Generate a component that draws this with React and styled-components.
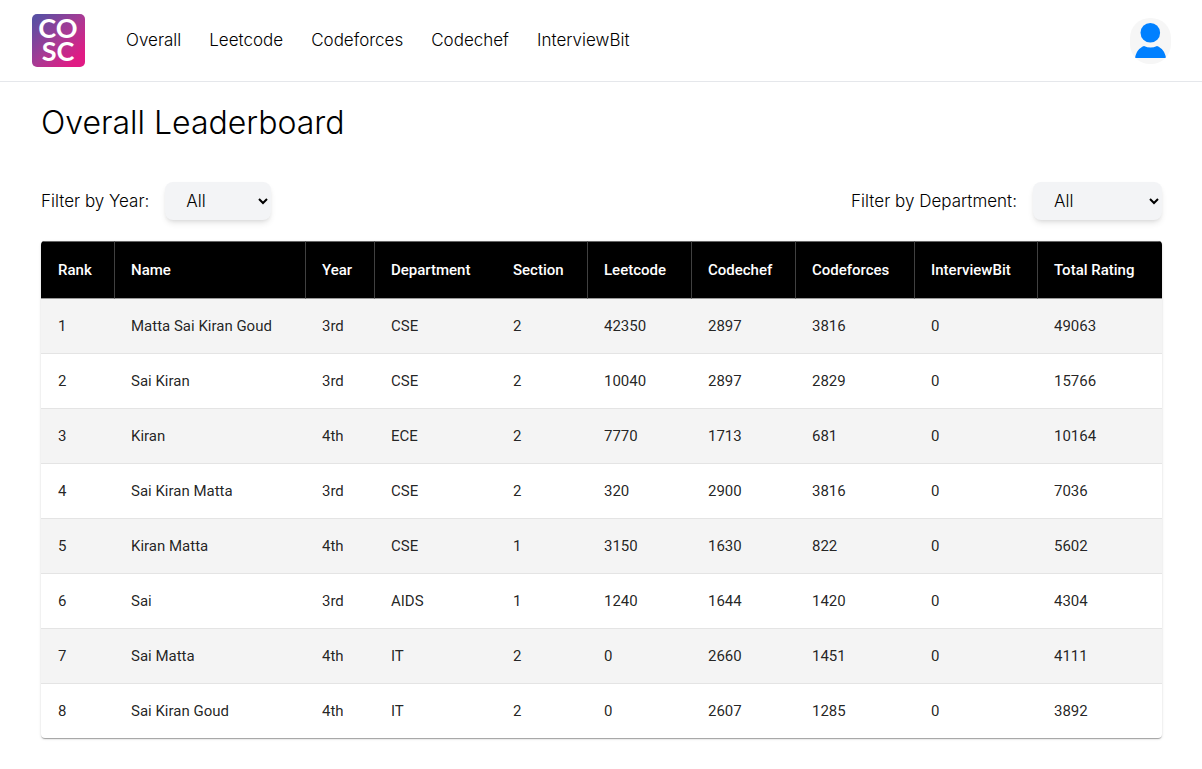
import React, { useState } from "react";
import styled, { createGlobalStyle } from "styled-components";

const GlobalStyle = createGlobalStyle`
  *, *::before, *::after { box-sizing: border-box; }
  body {
    margin: 0;
    background: #fff;
    color: #000;
    font-family: Inter, "Liberation Sans", sans-serif;
    font-size: 17px;
    font-weight: 300;
    line-height: 24px;
  }
`;

const Header = styled.header`
  display: flex;
  align-items: center;
  justify-content: space-between;
  height: 82px;
  padding: 0 31px 0 32px;
  border-bottom: 1px solid #e5e7eb;
`;

const HeaderStart = styled.div`
  display: flex;
  align-items: center;
  gap: 41px;
`;

const HomeLink = styled.a`
  display: block;
  height: 53px;
`;

const Nav = styled.nav`
  display: flex;
  gap: 28px;
  padding-bottom: 2px;
`;

const NavLink = styled.a`
  color: inherit;
  text-decoration: none;
`;

const ProfileButton = styled.button`
  display: block;
  width: 41px;
  height: 46px;
  padding: 0;
  border: 0;
  border-radius: 20px;
  overflow: hidden;
  background: #f6f6f6;
  cursor: pointer;
`;

const Main = styled.main`
  padding: 20px 40px 30px 41px;
`;

const Title = styled.h1`
  margin: 0 0 38px;
  font-size: 32px;
  font-weight: 300;
  line-height: 42px;
`;

const Filters = styled.div`
  display: flex;
  justify-content: space-between;
  margin-bottom: 21px;
`;

const Filter = styled.div`
  display: flex;
  align-items: center;
  gap: 16px;
`;

const Select = styled.select`
  width: ${({ $wide }) => ($wide ? 129 : 106)}px;
  height: 38px;
  padding: 0 0 0 17px;
  border: 0;
  border-radius: 8px;
  background: #f3f4f6;
  box-shadow: 0 4px 6px -1px rgba(0, 0, 0, 0.1), 0 2px 4px -2px rgba(0, 0, 0, 0.1);
  color: #000;
  font: inherit;
`;

const Paper = styled.div`
  overflow: hidden;
  border-radius: 4px;
  background: #fff;
  box-shadow: 0 2px 1px -1px rgba(0, 0, 0, 0.2), 0 1px 1px 0 rgba(0, 0, 0, 0.14),
    0 1px 3px 0 rgba(0, 0, 0, 0.12);
`;

const Table = styled.table`
  width: 100%;
  table-layout: fixed;
  border-collapse: separate;
  border-spacing: 0;
  font-family: Roboto, "Liberation Sans", sans-serif;
  font-size: 15px;
  font-weight: 400;
  line-height: 22px;
  text-align: left;
`;

const Column = styled.col`
  width: ${({ $width }) => $width}px;
`;

const HeadCell = styled.th`
  height: 58px;
  padding: 0;
  padding-left: ${({ $divided }) => ($divided ? 16 : 17)}px;
  border-top: 1px solid #666;
  border-bottom: 1px solid #999;
  border-left: ${({ $divided }) => ($divided ? "1px solid #404040" : "0")};
  background: #000;
  color: #fff;
  font-weight: 500;
  white-space: nowrap;
`;

const Row = styled.tr`
  &:nth-child(odd) {
    background: #f4f4f4;
  }
  &:last-child td {
    border-bottom: 0;
  }
`;

const Cell = styled.td`
  padding: 16px 0 16px 17px;
  border-bottom: 1px solid #e4e4e4;
  color: rgba(0, 0, 0, 0.87);
`;

const LogoSvg = styled.svg`
  display: block;
  overflow: visible;
`;

const columns = [
  { label: "Rank", width: 73 },
  { label: "Name", width: 191, divided: true },
  { label: "Year", width: 69, divided: true },
  { label: "Department", width: 122, divided: true },
  { label: "Section", width: 91 },
  { label: "Leetcode", width: 104, divided: true },
  { label: "Codechef", width: 104, divided: true },
  { label: "Codeforces", width: 119, divided: true },
  { label: "InterviewBit", width: 123, divided: true },
  { label: "Total Rating", width: 125, divided: true },
];

const students = [
  [1, "Matta Sai Kiran Goud", "3rd", "CSE", 2, 42350, 2897, 3816, 0, 49063],
  [2, "Sai Kiran", "3rd", "CSE", 2, 10040, 2897, 2829, 0, 15766],
  [3, "Kiran", "4th", "ECE", 2, 7770, 1713, 681, 0, 10164],
  [4, "Sai Kiran Matta", "3rd", "CSE", 2, 320, 2900, 3816, 0, 7036],
  [5, "Kiran Matta", "4th", "CSE", 1, 3150, 1630, 822, 0, 5602],
  [6, "Sai", "3rd", "AIDS", 1, 1240, 1644, 1420, 0, 4304],
  [7, "Sai Matta", "4th", "IT", 2, 0, 2660, 1451, 0, 4111],
  [8, "Sai Kiran Goud", "4th", "IT", 2, 0, 2607, 1285, 0, 3892],
];

const sites = ["Overall", "Leetcode", "Codeforces", "Codechef", "InterviewBit"];

function Logo() {
  return (
    <LogoSvg width="53" height="53" viewBox="0 0 53 53" role="img" aria-label="COSC">
      <defs>
        <linearGradient id="logo-fill" x1="0" y1="0" x2="1" y2="1">
          <stop offset="0.08" stopColor="#5a4fa3" />
          <stop offset="0.5" stopColor="#a83a94" />
          <stop offset="0.85" stopColor="#e01b84" />
        </linearGradient>
      </defs>
      <rect width="53" height="53" rx="5" fill="url(#logo-fill)" />
      <text fill="#fff" fontFamily="Lato, sans-serif" fontWeight="700" fontSize="27" textAnchor="middle">
        <tspan x="26" y="24">CO</tspan>
        <tspan x="26" y="47">SC</tspan>
      </text>
    </LogoSvg>
  );
}

function Avatar() {
  return (
    <svg width="41" height="46" viewBox="0 0 41 46" aria-hidden="true">
      <circle cx="20.3" cy="14.7" r="9.8" fill="#0080ff" />
      <path d="M5 40 C6 34 9 30 14 28 Q20.500 31 27 28 C32 30 35 34 36 40 Z" fill="#0080ff" />
    </svg>
  );
}

export default function App() {
  const [year, setYear] = useState("All");
  const [department, setDepartment] = useState("All");
  const shown = students.filter(
    (s) => (year === "All" || s[2] === year) && (department === "All" || s[3] === department)
  );

  return (
    <>
      <GlobalStyle />
      <Header>
        <HeaderStart>
          <HomeLink href="#home"><Logo /></HomeLink>
          <Nav>
            {sites.map((site) => (
              <NavLink key={site} href={`#${site.toLowerCase()}`}>{site}</NavLink>
            ))}
          </Nav>
        </HeaderStart>
        <ProfileButton type="button" aria-label="Profile"><Avatar /></ProfileButton>
      </Header>
      <Main>
        <Title>Overall Leaderboard</Title>
        <Filters>
          <Filter>
            <label htmlFor="year">Filter by Year:</label>
            <Select id="year" value={year} onChange={(e) => setYear(e.target.value)}>
              {["All", "3rd", "4th"].map((o) => <option key={o}>{o}</option>)}
            </Select>
          </Filter>
          <Filter>
            <label htmlFor="department">Filter by Department:</label>
            <Select id="department" $wide value={department} onChange={(e) => setDepartment(e.target.value)}>
              {["All", "CSE", "ECE", "AIDS", "IT"].map((o) => <option key={o}>{o}</option>)}
            </Select>
          </Filter>
        </Filters>
        <Paper>
          <Table>
            <colgroup>
              {columns.map((c) => <Column key={c.label} $width={c.width} />)}
            </colgroup>
            <thead>
              <tr>
                {columns.map((c) => (
                  <HeadCell key={c.label} scope="col" $divided={c.divided}>{c.label}</HeadCell>
                ))}
              </tr>
            </thead>
            <tbody>
              {shown.map((s) => (
                <Row key={s[0]}>
                  {s.map((value, i) => <Cell key={columns[i].label}>{value}</Cell>)}
                </Row>
              ))}
            </tbody>
          </Table>
        </Paper>
      </Main>
    </>
  );
}
